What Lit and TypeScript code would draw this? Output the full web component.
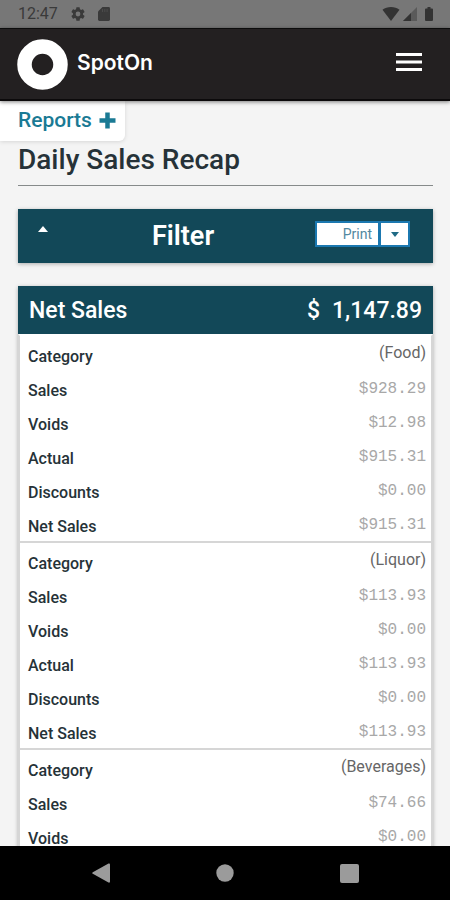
import { LitElement, html, css } from "lit";
import { customElement, property } from "lit/decorators.js";

interface CategoryGroup {
  category: string;
  amounts: [label: string, value: string][];
}

const GROUPS: CategoryGroup[] = [
  {
    category: "(Food)",
    amounts: [
      ["Sales", "$928.29"],
      ["Voids", "$12.98"],
      ["Actual", "$915.31"],
      ["Discounts", "$0.00"],
      ["Net Sales", "$915.31"],
    ],
  },
  {
    category: "(Liquor)",
    amounts: [
      ["Sales", "$113.93"],
      ["Voids", "$0.00"],
      ["Actual", "$113.93"],
      ["Discounts", "$0.00"],
      ["Net Sales", "$113.93"],
    ],
  },
  {
    category: "(Beverages)",
    amounts: [
      ["Sales", "$74.66"],
      ["Voids", "$0.00"],
    ],
  },
];

const buttonReset = css`
  button {
    display: flex;
    align-items: center;
    justify-content: center;
    margin: 0;
    padding: 0;
    border: 0;
    background: none;
    color: inherit;
    font: inherit;
    cursor: pointer;
  }
  svg {
    display: block;
  }
`;

@customElement("status-bar")
export class StatusBar extends LitElement {
  static styles = css`
    :host {
      display: flex;
      align-items: center;
      justify-content: space-between;
      flex: none;
      height: 28px;
      padding: 0 17px 0 18px;
      background: #777;
      color: #3a3a3a;
      font-size: 16px;
      line-height: 28px;
    }
    .side {
      display: flex;
      align-items: center;
    }
    .left {
      gap: 13px;
    }
    .right {
      gap: 3px;
    }
    .battery {
      margin-left: 5px;
    }
    svg {
      display: block;
    }
  `;

  render() {
    return html`
      <div class="side left">
        <span>12:47</span>
        <svg width="14" height="14" viewBox="2 2 20 20" fill="currentColor" aria-hidden="true">
          <path d="M19.14 12.94c.04-.3.06-.61.06-.94s-.02-.64-.07-.94l2.03-1.58a.49.49 0 0 0 .12-.61l-1.92-3.32a.49.49 0 0 0-.59-.22l-2.39.96a7 7 0 0 0-1.62-.94l-.36-2.54a.48.48 0 0 0-.48-.41h-3.84a.48.48 0 0 0-.47.41l-.36 2.54c-.59.24-1.13.57-1.62.94l-2.39-.96a.48.48 0 0 0-.59.22L2.74 8.87a.48.48 0 0 0 .12.61l2.03 1.58c-.05.3-.09.63-.09.94s.02.64.07.94l-2.03 1.58a.49.49 0 0 0-.12.61l1.92 3.32c.12.22.37.29.59.22l2.39-.96c.5.38 1.03.7 1.62.94l.36 2.54c.05.24.24.41.48.41h3.84c.24 0 .44-.17.47-.41l.36-2.54a7 7 0 0 0 1.62-.94l2.39.96c.22.08.47 0 .59-.22l1.92-3.32a.48.48 0 0 0-.12-.61zM12 15.400a3.400 3.400 0 1 1 0-6.800 3.400 3.400 0 0 1 0 6.800z" />
        </svg>
        <svg width="12" height="14" viewBox="0 0 12 14" aria-hidden="true">
          <path fill="currentColor" d="M4.500 0H10.600Q12 0 12 1.400V12.600Q12 14 10.600 14H1.400Q0 14 0 12.600V4.500Z" />
          <path stroke="#777" stroke-width="1" opacity=".3" d="M4.500 2v3M6.800 2v3M9.100 2v3" />
        </svg>
      </div>
      <div class="side right">
        <svg width="18" height="14" viewBox="0 0 18 14" fill="#333" aria-hidden="true">
          <path d="M9 14 .5 2.800C3 .9 5.700 0 9 0s6 .9 8.500 2.800Z" />
        </svg>
        <svg width="14" height="14" viewBox="0 0 14 14" aria-hidden="true">
          <path fill="#5a5a5a" d="M14 0V14H0Z" />
          <path fill="#333" d="M8 6V14H0Z" />
        </svg>
        <svg class="battery" width="8" height="14" viewBox="0 0 8 14" fill="#333" aria-hidden="true">
          <path d="M2.500 0h3v1.400H7Q8 1.400 8 2.400V13Q8 14 7 14H1Q0 14 0 13V2.400Q0 1.400 1 1.400H2.500Z" />
        </svg>
      </div>
    `;
  }
}

@customElement("brand-header")
export class BrandHeader extends LitElement {
  static styles = [
    buttonReset,
    css`
      :host {
        position: relative;
        z-index: 2;
        display: flex;
        align-items: center;
        justify-content: space-between;
        flex: none;
        box-sizing: border-box;
        height: 73px;
        padding: 0 25px 0 17px;
        border-top: 1px solid #0c0c0c;
        border-bottom: 2px solid #0c0a0b;
        background: #232021;
        color: #fff;
        box-shadow: 0 1px 4px rgba(0, 0, 0, 0.5);
      }
      .brand {
        display: flex;
        align-items: center;
        gap: 9px;
        color: inherit;
        text-decoration: none;
        font: 600 21px/28px Inter, sans-serif;
      }
      .brand span {
        padding-bottom: 2px;
      }
      .menu {
        width: 32px;
        height: 32px;
        padding-bottom: 4px;
      }
    `,
  ];

  render() {
    return html`
      <a class="brand" href="#home">
        <svg width="51" height="51" viewBox="0 0 51 51" aria-hidden="true">
          <circle cx="25.500" cy="25.500" r="18" fill="none" stroke="#fff" stroke-width="14.500" />
        </svg>
        <span>SpotOn</span>
      </a>
      <button class="menu" aria-label="Menu">
        <svg width="26" height="18" viewBox="0 0 26 18" aria-hidden="true">
          <path stroke="#fff" stroke-width="3" d="M0 1.500H26M0 9H26M0 16.500H26" />
        </svg>
      </button>
    `;
  }
}

@customElement("filter-bar")
export class FilterBar extends LitElement {
  static styles = [
    buttonReset,
    css`
      :host {
        display: flex;
        align-items: center;
        box-sizing: border-box;
        height: 54px;
        padding: 0 23px 4px 15px;
        background: #124858;
        color: #fff;
        box-shadow: 0 1px 4px rgba(0, 0, 0, 0.3);
      }
      .toggle {
        align-self: flex-start;
        width: 20px;
        height: 40px;
      }
      h2 {
        flex: 1;
        margin: 0;
        padding: 4px 2px 0 0;
        font-size: 27px;
        font-weight: 600;
        line-height: 32px;
        text-align: center;
      }
      .split {
        display: flex;
        height: 26px;
      }
      .split button {
        box-sizing: border-box;
        border: 2px solid #1b78b0;
        background: #fff;
        color: #5288a0;
      }
      .split .print {
        justify-content: flex-end;
        width: 65px;
        padding-right: 6px;
        font-size: 14px;
      }
      .split .more {
        width: 31px;
        margin-left: -1px;
        color: #1f6a85;
      }
    `,
  ];

  render() {
    return html`
      <button class="toggle" aria-label="Collapse filter">
        <svg width="10" height="6" viewBox="0 0 10 6" fill="currentColor" aria-hidden="true">
          <path d="M5 0 10 6H0Z" />
        </svg>
      </button>
      <h2>Filter</h2>
      <div class="split">
        <button class="print">Print</button>
        <button class="more" aria-label="Print options">
          <svg width="8" height="5" viewBox="0 0 8 5" fill="currentColor" aria-hidden="true">
            <path d="M0 0H8L4 5Z" />
          </svg>
        </button>
      </div>
    `;
  }
}

@customElement("sales-table")
export class SalesTable extends LitElement {
  @property({ attribute: false }) groups: CategoryGroup[] = [];

  static styles = css`
    :host {
      display: block;
      background: #fff;
      box-shadow: 0 1px 4px rgba(0, 0, 0, 0.3);
    }
    table {
      width: 100%;
      border-collapse: separate;
      border-spacing: 0;
    }
    th,
    td {
      box-sizing: border-box;
      padding: 0;
    }
    thead th {
      height: 48px;
      background: #124858;
      color: #fff;
      font-size: 23px;
      font-weight: 500;
      text-align: left;
    }
    thead th:first-child {
      padding-left: 11px;
    }
    thead .total {
      padding-right: 11px;
      text-align: right;
    }
    .currency {
      margin-right: 12px;
    }
    tbody th,
    tbody td {
      height: 34px;
      line-height: 20px;
    }
    tbody th {
      padding: 6px 0 0 8px;
      border-left: 2px solid #d6d6d6;
      color: #263238;
      font-size: 16px;
      font-weight: 500;
      text-align: left;
    }
    tbody td {
      padding: 0 5px 2px 0;
      border-right: 2px solid #d6d6d6;
      color: #666;
      font-size: 16px;
      text-align: right;
    }
    tbody .amount {
      padding: 2px 5px 0 0;
      color: #a8a8a8;
      font-family: "Liberation Mono", monospace;
    }
    tbody tr:first-child > * {
      height: 37px;
      border-top: 2px solid #d6d6d6;
    }
    thead + tbody tr:first-child > * {
      border-top-color: #fff;
    }
  `;

  render() {
    return html`
      <table>
        <thead>
          <tr>
            <th scope="col">Net Sales</th>
            <th scope="col" class="total"><span class="currency">$</span>1,147.89</th>
          </tr>
        </thead>
        ${this.groups.map(
          (group) => html`
            <tbody>
              <tr>
                <th scope="row">Category</th>
                <td>${group.category}</td>
              </tr>
              ${group.amounts.map(
                ([label, value]) => html`
                  <tr>
                    <th scope="row">${label}</th>
                    <td class="amount">${value}</td>
                  </tr>
                `
              )}
            </tbody>
          `
        )}
      </table>
    `;
  }
}

@customElement("system-nav")
export class SystemNav extends LitElement {
  static styles = [
    buttonReset,
    css`
      :host {
        display: flex;
        align-items: center;
        justify-content: center;
        gap: 76px;
        flex: none;
        height: 54px;
        background: #000;
        color: #9b9b9b;
      }
      button {
        width: 48px;
        height: 48px;
      }
    `,
  ];

  render() {
    return html`
      <button aria-label="Back">
        <svg width="18" height="20" viewBox="0 0 18 20" fill="currentColor" aria-hidden="true">
          <path d="M16.500 .5Q18 0 18 1.500V18.500Q18 20 16.500 19.500L.8 10.800Q-.4 10 .8 9.200Z" />
        </svg>
      </button>
      <button aria-label="Home">
        <svg width="18" height="18" viewBox="0 0 18 18" fill="currentColor" aria-hidden="true">
          <circle cx="9" cy="9" r="8.700" />
        </svg>
      </button>
      <button aria-label="Recent apps">
        <svg width="19" height="19" viewBox="0 0 19 19" fill="currentColor" aria-hidden="true">
          <rect width="19" height="19" rx="2" />
        </svg>
      </button>
    `;
  }
}

@customElement("app-root")
export class AppRoot extends LitElement {
  static styles = css`
    :host {
      display: flex;
      flex-direction: column;
      height: 100vh;
      overflow: hidden;
      background: #f4f4f4;
      font-family: Roboto, sans-serif;
    }
    main {
      flex: 1;
      min-height: 0;
      overflow: hidden;
    }
    .reports {
      display: flex;
      align-items: center;
      gap: 7px;
      box-sizing: border-box;
      width: fit-content;
      height: 40px;
      padding: 0 9px 2px 18px;
      border-radius: 0 0 6px 0;
      background: #fff;
      color: #1a7a94;
      font-size: 21px;
      font-weight: 500;
      line-height: 24px;
      text-decoration: none;
      box-shadow: 0 1px 4px rgba(0, 0, 0, 0.12);
    }
    .content {
      display: flex;
      flex-direction: column;
      gap: 23px;
      padding: 0 17px 0 18px;
    }
    h1 {
      margin: 0;
      padding: 3px 0 9px;
      border-bottom: 1px solid #868a8a;
      color: #263238;
      font-size: 28px;
      font-weight: 500;
      line-height: 32px;
    }
  `;

  render() {
    return html`
      <status-bar></status-bar>
      <brand-header></brand-header>
      <main>
        <a class="reports" href="#reports">
          Reports
          <svg width="17" height="17" viewBox="0 0 17 17" aria-hidden="true">
            <path stroke="currentColor" stroke-width="4.500" stroke-linecap="butt" d="M8.500 .5V16.500M.5 8.500H16.500" />
          </svg>
        </a>
        <div class="content">
          <h1>Daily Sales Recap</h1>
          <filter-bar></filter-bar>
          <sales-table .groups=${GROUPS}></sales-table>
        </div>
      </main>
      <system-nav></system-nav>
    `;
  }
}
